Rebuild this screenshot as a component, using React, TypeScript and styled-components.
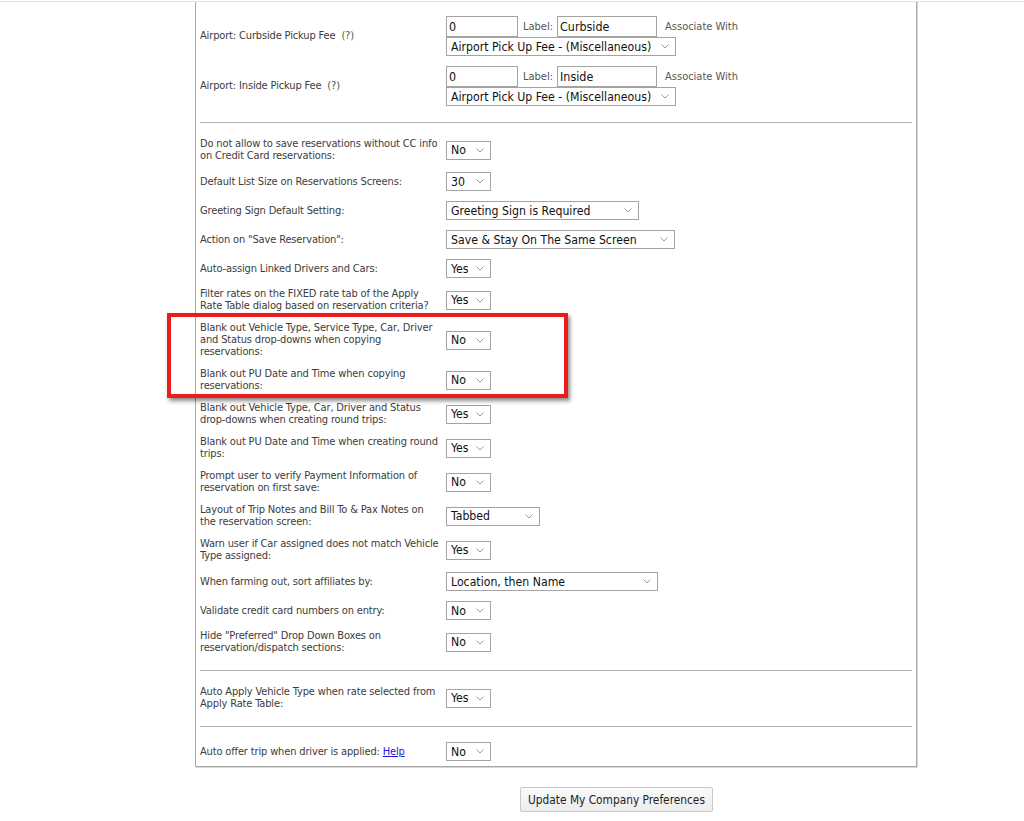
import * as React from 'react';
import styled, { createGlobalStyle } from 'styled-components';

const GlobalStyle = createGlobalStyle`
  html, body {
    margin: 0;
    padding: 0;
    background: #ffffff;
  }
  body {
    font-family: "DejaVu Sans Condensed", "Liberation Sans", sans-serif;
    border-top: 1px solid #e4e4e4;
    margin-top: 1px;
  }
`;

const Page = styled.div`
  display: flex;
  flex-direction: column;
  padding-bottom: 9px;
`;

const Panel = styled.div`
  margin-left: 195px;
  margin-top: -2px;
  width: 722px;
  border: 1px solid #a9a9a9;
  border-top: none;
  box-shadow: 1px 1px 0 #d6d6d6;
  padding: 11px 4px 0 4px;
  box-sizing: border-box;
`;

const Row = styled.div`
  display: grid;
  grid-template-columns: 246px 1fr;
  align-items: center;
  padding: 5px 0;
  min-height: 19px;
`;

const Label = styled.div`
  font-size: 11px;
  line-height: 12px;
  letter-spacing: -0.15px;
  color: #3c3c3c;
  padding-right: 4px;
`;

const Hint = styled.span`
  color: #555;
  margin-left: 6px;
`;

const HelpLink = styled.a`
  color: #1a1ad6;
  text-decoration: underline;
  cursor: pointer;
`;

const Controls = styled.div`
  display: flex;
  flex-direction: column;
`;

const FeeLine = styled.div`
  display: flex;
  align-items: center;
`;

const TextBox = styled.div<{ $w: number }>`
  width: ${(p) => p.$w}px;
  height: 21px;
  box-sizing: border-box;
  border: 1px solid #a3a3a3;
  font-size: 12.4px;
  line-height: 19px;
  padding-left: 2px;
  color: #111;
`;

const SmallText = styled.span<{ $gap: number }>`
  font-size: 11px;
  color: #555;
  margin: 0 4px 0 ${(p) => p.$gap}px;
`;

const DropBox = styled.div<{ $w: number }>`
  width: ${(p) => p.$w}px;
  height: 19px;
  box-sizing: border-box;
  border: 1px solid #a3a3a3;
  background: #fff;
  display: flex;
  align-items: center;
  justify-content: space-between;
  padding: 0 6px 0 4px;
  font-size: 12.2px;
  color: #111;
  white-space: nowrap;
`;

const Divider = styled.hr`
  border: none;
  border-top: 1px solid #b0b0b0;
  margin: 11px 0 10px;
  height: 0;
`;

const Highlight = styled.div`
  position: relative;
`;

const RedBox = styled.div`
  position: absolute;
  top: -4px;
  bottom: -1px;
  left: -33px;
  width: 401px;
  box-sizing: border-box;
  border: 4px solid #ec1c1c;
  box-shadow: 2px 3px 4px rgba(0, 0, 0, 0.45);
  pointer-events: none;
`;

const Footer = styled.div`
  display: flex;
  padding: 20px 0 0 520px;
`;

const Button = styled.button`
  font-family: "DejaVu Sans Condensed", "Liberation Sans", sans-serif;
  font-size: 11.8px;
  color: #222;
  width: 193px;
  height: 25px;
  background: linear-gradient(#fafafa, #ececec);
  border: 1px solid #c8c8c8;
  border-radius: 2px;
  padding: 0;
`;

const Chevron = () => (
  <svg width="8" height="5" viewBox="0 0 8 5" fill="none">
    <path d="M0.5 0.5 L4 4 L7.5 0.5" stroke="#9a9a9a" strokeWidth="1" />
  </svg>
);

const Select = ({ value, width }: { value: string; width: number }) => (
  <DropBox $w={width}>
    <span>{value}</span>
    <Chevron />
  </DropBox>
);

interface ISetting {
  label: React.ReactNode;
  value: string;
  width?: number;
}

const Setting = ({ label, value, width = 45 }: ISetting) => (
  <Row>
    <Label>{label}</Label>
    <div>
      <Select value={value} width={width} />
    </div>
  </Row>
);

const FeeRow = ({ title, amount, name }: { title: string; amount: string; name: string }) => (
  <Row>
    <Label>
      {title}
      <Hint>(?)</Hint>
    </Label>
    <Controls>
      <FeeLine>
        <TextBox $w={72}>{amount}</TextBox>
        <SmallText $gap={5}>Label:</SmallText>
        <TextBox $w={100}>{name}</TextBox>
        <SmallText $gap={8}>Associate With</SmallText>
      </FeeLine>
      <Select value="Airport Pick Up Fee - (Miscellaneous)" width={230} />
    </Controls>
  </Row>
);

export default function App() {
  return (
    <Page>
      <GlobalStyle />
      <Panel>
        <FeeRow title="Airport: Curbside Pickup Fee" amount="0" name="Curbside" />
        <FeeRow title="Airport: Inside Pickup Fee" amount="0" name="Inside" />
        <Divider />
        <Setting label="Do not allow to save reservations without CC info on Credit Card reservations:" value="No" />
        <Setting label="Default List Size on Reservations Screens:" value="30" />
        <Setting label="Greeting Sign Default Setting:" value="Greeting Sign is Required" width={193} />
        <Setting label={'Action on "Save Reservation":'} value="Save & Stay On The Same Screen" width={229} />
        <Setting label="Auto-assign Linked Drivers and Cars:" value="Yes" />
        <Setting label="Filter rates on the FIXED rate tab of the Apply Rate Table dialog based on reservation criteria?" value="Yes" />
        <Highlight>
          <Setting label="Blank out Vehicle Type, Service Type, Car, Driver and Status drop-downs when copying reservations:" value="No" />
          <Setting label="Blank out PU Date and Time when copying reservations:" value="No" />
          <RedBox />
        </Highlight>
        <Setting label="Blank out Vehicle Type, Car, Driver and Status drop-downs when creating round trips:" value="Yes" />
        <Setting label="Blank out PU Date and Time when creating round trips:" value="Yes" />
        <Setting label="Prompt user to verify Payment Information of reservation on first save:" value="No" />
        <Setting label="Layout of Trip Notes and Bill To & Pax Notes on the reservation screen:" value="Tabbed" width={94} />
        <Setting label="Warn user if Car assigned does not match Vehicle Type assigned:" value="Yes" />
        <Setting label="When farming out, sort affiliates by:" value="Location, then Name" width={212} />
        <Setting label="Validate credit card numbers on entry:" value="No" />
        <Setting label={'Hide "Preferred" Drop Down Boxes on reservation/dispatch sections:'} value="No" />
        <Divider />
        <Setting label="Auto Apply Vehicle Type when rate selected from Apply Rate Table:" value="Yes" />
        <Divider />
        <Setting
          label={
            <>
              Auto offer trip when driver is applied: <HelpLink>Help</HelpLink>
            </>
          }
          value="No"
        />
      </Panel>
      <Footer>
        <Button>Update My Company Preferences</Button>
      </Footer>
    </Page>
  );
}
